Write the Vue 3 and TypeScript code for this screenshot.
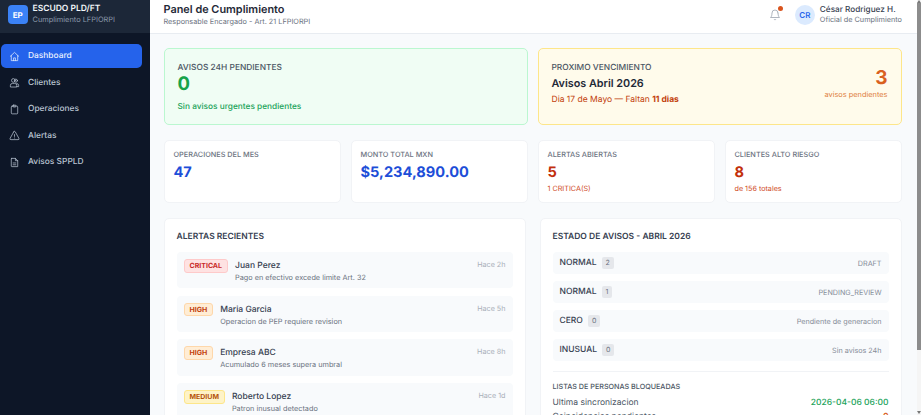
<script setup lang="ts">
const nav = [
  { label: 'Dashboard', icon: 'home', active: true },
  { label: 'Clientes', icon: 'users', active: false },
  { label: 'Operaciones', icon: 'clip', active: false },
  { label: 'Alertas', icon: 'warn', active: false },
  { label: 'Avisos SPPLD', icon: 'doc', active: false },
]
const stats = [
  { label: 'OPERACIONES DEL MES', value: '47', sub: '', tone: 'blue' },
  { label: 'MONTO TOTAL MXN', value: '$5,234,890.00', sub: '', tone: 'blue' },
  { label: 'ALERTAS ABIERTAS', value: '5', sub: '1 CRITICA(S)', tone: 'red' },
  { label: 'CLIENTES ALTO RIESGO', value: '8', sub: 'de 156 totales', tone: 'red' },
]
const alerts = [
  { level: 'CRITICAL', cls: 'critical', name: 'Juan Perez', desc: 'Pago en efectivo excede limite Art. 32', time: 'Hace 2h' },
  { level: 'HIGH', cls: 'high', name: 'Maria Garcia', desc: 'Operacion de PEP requiere revision', time: 'Hace 5h' },
  { level: 'HIGH', cls: 'high', name: 'Empresa ABC', desc: 'Acumulado 6 meses supera umbral', time: 'Hace 8h' },
  { level: 'MEDIUM', cls: 'medium', name: 'Roberto Lopez', desc: 'Patron inusual detectado', time: 'Hace 1d' },
]
const avisos = [
  { type: 'NORMAL', count: 2, status: 'DRAFT' },
  { type: 'NORMAL', count: 1, status: 'PENDING_REVIEW' },
  { type: 'CERO', count: 0, status: 'Pendiente de generacion' },
  { type: 'INUSUAL', count: 0, status: 'Sin avisos 24h' },
]
</script>

<template>
  <div class="app">
    <aside class="sidebar">
      <div class="brand">
        <div class="logo">EP</div>
        <div>
          <div class="brand-name">ESCUDO PLD/FT</div>
          <div class="brand-sub">Cumplimiento LFPIORPI</div>
        </div>
      </div>
      <nav class="nav">
        <a v-for="item in nav" :key="item.label" class="nav-item" :class="{ active: item.active }">
          <svg class="nav-icon" viewBox="0 0 24 24" fill="none" stroke="currentColor" stroke-width="1.6" stroke-linecap="round" stroke-linejoin="round">
            <template v-if="item.icon === 'home'">
              <path d="M3 11.5 12 3l9 8.5" /><path d="M5 10v11h14V10" /><path d="M10 21v-6h4v6" />
            </template>
            <template v-else-if="item.icon === 'users'">
              <circle cx="9.5" cy="7.5" r="4" /><circle cx="15" cy="8" r="3.4" /><path d="M3 21v-2.5A4.5 4.5 0 0 1 7.5 14h5a4.5 4.5 0 0 1 4.5 4.5V21z" /><path d="M17 14.2a4 4 0 0 1 4 4V21h-4" />
            </template>
            <template v-else-if="item.icon === 'clip'">
              <rect x="5" y="4.5" width="14" height="17" rx="2" /><rect x="9" y="2.5" width="6" height="4" rx="1" />
            </template>
            <template v-else-if="item.icon === 'warn'">
              <path d="M10.3 4 2.5 18a2 2 0 0 0 1.7 3h15.6a2 2 0 0 0 1.7-3L13.7 4a2 2 0 0 0-3.4 0z" /><path d="M12 10v4" /><path d="M12 17.5h.01" />
            </template>
            <template v-else>
              <path d="M6 3h8l5 5v13H6a1 1 0 0 1-1-1V4a1 1 0 0 1 1-1z" /><path d="M14 3v5h5" /><path d="M9 13h6" /><path d="M9 17h6" />
            </template>
          </svg>
          <span>{{ item.label }}</span>
        </a>
      </nav>
    </aside>

    <div class="main">
      <header class="topbar">
        <div>
          <div class="title">Panel de Cumplimiento</div>
          <div class="subtitle">Responsable Encargado - Art. 21 LFPIORPI</div>
        </div>
        <div class="top-right">
          <div class="bell">
            <svg viewBox="0 0 24 24" fill="none" stroke="currentColor" stroke-width="1.6" stroke-linecap="round" stroke-linejoin="round">
              <path d="M18 8a6 6 0 0 0-12 0c0 7-3 9-3 9h18s-3-2-3-9" /><path d="M13.7 21a2 2 0 0 1-3.4 0" />
            </svg>
            <span class="bell-dot"></span>
          </div>
          <div class="avatar">CR</div>
          <div>
            <div class="user-name">César Rodriguez H.</div>
            <div class="user-role">Oficial de Cumplimiento</div>
          </div>
        </div>
      </header>

      <main class="content">
        <section class="hero-row">
          <div class="hero hero-green">
            <div class="hero-label">AVISOS 24H PENDIENTES</div>
            <div class="hero-zero">0</div>
            <div class="hero-ok">Sin avisos urgentes pendientes</div>
          </div>
          <div class="hero hero-yellow">
            <div>
              <div class="hero-label">PROXIMO VENCIMIENTO</div>
              <div class="hero-title">Avisos Abril 2026</div>
              <div class="hero-due">Dia 17 de Mayo — Faltan <strong>11 dias</strong></div>
            </div>
            <div class="hero-side">
              <div class="hero-num">3</div>
              <div class="hero-num-label">avisos pendientes</div>
            </div>
          </div>
        </section>

        <section class="stats">
          <div v-for="s in stats" :key="s.label" class="stat">
            <div class="stat-label">{{ s.label }}</div>
            <div class="stat-value" :class="s.tone">{{ s.value }}</div>
            <div v-if="s.sub" class="stat-sub">{{ s.sub }}</div>
          </div>
        </section>

        <section class="panels">
          <div class="panel">
            <h3 class="panel-title">ALERTAS RECIENTES</h3>
            <div class="alert-list">
              <div v-for="a in alerts" :key="a.name" class="alert">
                <span class="badge" :class="a.cls">{{ a.level }}</span>
                <div class="alert-body">
                  <div class="alert-name">{{ a.name }}</div>
                  <div class="alert-desc">{{ a.desc }}</div>
                </div>
                <span class="alert-time">{{ a.time }}</span>
              </div>
            </div>
          </div>
          <div class="panel">
            <h3 class="panel-title">ESTADO DE AVISOS - ABRIL 2026</h3>
            <div class="aviso-list">
              <div v-for="(a, i) in avisos" :key="i" class="aviso">
                <span class="aviso-type">{{ a.type }}</span>
                <span class="count">{{ a.count }}</span>
                <span class="aviso-status">{{ a.status }}</span>
              </div>
            </div>
            <div class="lists">
              <div class="lists-title">LISTAS DE PERSONAS BLOQUEADAS</div>
              <div class="lists-row"><span>Ultima sincronizacion</span><span class="ok">2026-04-06 06:00</span></div>
              <div class="lists-row"><span>Coincidencias pendientes</span><span class="warn">0</span></div>
            </div>
          </div>
        </section>
      </main>
    </div>
    <div class="scrollbar">
      <div class="arrow up"></div>
      <div class="thumb"></div>
      <div class="arrow down"></div>
    </div>
  </div>
</template>

<style scoped>
.app {
  position: relative;
  display: flex;
  width: 921px;
  height: 415px;
  overflow: hidden;
  background: #f8fafc;
  font-family: Inter, "Noto Sans", sans-serif;
  color: #1f2937;
  text-rendering: geometricPrecision;
  will-change: opacity;
  opacity: 0.999;
}
.sidebar {
  flex: 0 0 149.5px;
  background: #0d1627;
  color: #b9c4d2;
}
.brand {
  display: flex;
  align-items: center;
  gap: 5px;
  height: 33px;
  padding: 0 8px 4px;
  background: #1c2738;
  box-sizing: border-box;
}
.logo {
  width: 19.5px;
  height: 19.5px;
  border-radius: 4px;
  background: #3b82f6;
  color: #fff;
  font-size: 8px;
  font-weight: 700;
  display: flex;
  align-items: center;
  justify-content: center;
}
.brand-name { font-size: 8.5px; font-weight: 600; color: #f1f5f9; line-height: 11px; }
.brand-sub { font-size: 7.4px; color: #8b98aa; line-height: 10px; }
.nav { display: flex; flex-direction: column; gap: 2px; padding: 10.8px 8px 0 1px; }
.nav-item {
  display: flex;
  align-items: center;
  gap: 8px;
  height: 24.6px;
  padding: 0 8px;
  border-radius: 5px;
  font-size: 8.4px;
  font-weight: 500;
  color: #b9c4d2;
}
.nav-item.active { background: #2563eb; color: #e8f0fe; }
.nav-icon { width: 11px; height: 11px; flex: none; }
.main { flex: 1; min-width: 0; display: flex; flex-direction: column; }
.topbar {
  height: 34px;
  box-sizing: border-box;
  flex: none;
  background: #fff;
  border-bottom: 1px solid #e8ecf1;
  display: flex;
  align-items: center;
  justify-content: space-between;
  padding: 0 19px 4px 14px;
}
.title { font-size: 10.9px; font-weight: 600; color: #1f2937; line-height: 15px; }
.subtitle { font-size: 7.3px; color: #6b7280; line-height: 10px; }
.top-right { display: flex; align-items: center; }
.bell { position: relative; width: 11px; height: 12px; color: #9ca3af; margin-right: 15px; }
.bell svg { width: 12px; height: 12px; display: block; }
.bell-dot { position: absolute; top: -3px; right: -3px; width: 5px; height: 5px; border-radius: 50%; background: #d9541e; }
.avatar {
  width: 20px;
  height: 20px;
  border-radius: 50%;
  background: #dbeafe;
  color: #2563eb;
  font-size: 8px;
  font-weight: 600;
  display: flex;
  align-items: center;
  justify-content: center;
  margin-right: 5px;
}
.user-name { font-size: 8.2px; font-weight: 500; color: #374151; line-height: 11px; }
.user-role { font-size: 7.3px; color: #6b7280; line-height: 10px; }
.content { padding: 14px 0 0 14px; width: 738px; }
.hero-row { display: grid; grid-template-columns: 1fr 1fr; gap: 10px; }
.hero {
  height: 77px;
  box-sizing: border-box;
  border-radius: 5px;
  padding: 14px 13px 0;
}
.hero-green { background: #f0fdf4; border: 1px solid #bbf7d0; }
.hero-yellow {
  background: #fffbeb;
  border: 1px solid #fde68a;
  display: flex;
  justify-content: space-between;
}
.hero-label { font-size: 8.4px; font-weight: 500; color: #4b5563; line-height: 11px; }
.hero-zero { font-size: 18.5px; font-weight: 700; color: #16a34a; line-height: 20px; }
.hero-ok { font-size: 8.3px; color: #22a35a; line-height: 11px; margin-top: 8px; font-weight: 500; }
.hero-title { font-size: 10.8px; font-weight: 600; color: #1f2937; line-height: 15px; margin-top: 2px; }
.hero-due { font-size: 8.5px; color: #c2410c; line-height: 11px; margin-top: 4px; }
.hero-due strong { font-weight: 700; }
.hero-side { text-align: right; padding-top: 4px; }
.hero-num { font-size: 19px; font-weight: 700; color: #d9601e; line-height: 22px; }
.hero-num-label { font-size: 7.4px; color: #e0803f; line-height: 10px; margin-top: 1px; }
.stats { display: grid; grid-template-columns: repeat(4, 1fr); gap: 10px; margin-top: 15px; }
.stat {
  height: 63px;
  box-sizing: border-box;
  background: #fff;
  border: 1px solid #f1f3f6;
  border-radius: 5px;
  padding: 9px 9px;
}
.stat-label { font-size: 7.3px; font-weight: 500; color: #6b7280; line-height: 10px; }
.stat-value { font-size: 14.6px; font-weight: 700; line-height: 20px; margin-top: 2px; }
.stat-value.blue { color: #1d4ed8; }
.stat-value.red { color: #c2300c; }
.stat-sub { font-size: 7.2px; color: #cf4b26; line-height: 10px; margin-top: 2px; }
.panels { display: grid; grid-template-columns: 1fr 1fr; gap: 14px; margin-top: 15px; }
.panel {
  background: #fff;
  border: 1px solid #f1f3f6;
  border-radius: 5px;
  padding: 13px 12px 0;
}
.panel-title { margin: 0; font-size: 8.5px; font-weight: 600; color: #374151; line-height: 11px; }
.alert-list { display: flex; flex-direction: column; gap: 7.3px; margin-top: 9px; }
.alert {
  display: flex;
  align-items: flex-start;
  height: 36.4px;
  box-sizing: border-box;
  background: #f8fafc;
  border-radius: 4px;
  padding: 7px 7px;
}
.badge {
  font-size: 7px;
  font-weight: 700;
  line-height: 11.5px;
  padding: 0 5px;
  border-radius: 3px;
  margin-right: 7px;
  border: 1px solid transparent;
  flex: none;
}
.badge.critical { background: #fee2e2; color: #c92a2a; border-color: #fecaca; }
.badge.high { background: #ffedd5; color: #c2410c; border-color: #fed7aa; }
.badge.medium { background: #fef3c7; color: #b45309; border-color: #fde68a; }
.alert-body { flex: 1; min-width: 0; }
.alert-name { font-size: 8.5px; font-weight: 500; color: #374151; line-height: 11px; margin-top: 2px; }
.alert-desc { font-size: 7.3px; color: #6b7280; line-height: 10px; margin-top: 1px; }
.alert-time { font-size: 7.2px; color: #a8afb9; line-height: 10px; margin-top: 1px; }
.aviso-list { display: flex; flex-direction: column; gap: 7.4px; margin-top: 9px; }
.aviso {
  display: flex;
  align-items: center;
  height: 21.6px;
  box-sizing: border-box;
  background: #f8fafc;
  border-radius: 4px;
  padding: 1px 7px 0;
}
.aviso-type { font-size: 8.5px; font-weight: 500; color: #374151; }
.count {
  font-size: 7px;
  color: #6b7280;
  background: #e5e7eb;
  border-radius: 2px;
  padding: 2px 4px;
  margin-left: 5px;
  line-height: 8px;
}
.aviso-status { margin-left: auto; font-size: 7.2px; color: #858c98; }
.lists { margin-top: 10px; border-top: 1px solid #f1f3f6; padding-top: 10px; }
.lists-title { font-size: 7.2px; font-weight: 500; color: #4b5563; line-height: 10px; }
.lists-row { display: flex; justify-content: space-between; font-size: 8.5px; color: #4b5563; line-height: 11px; margin-top: 6px; }
.lists-row + .lists-row { margin-top: 3px; }
.lists-row .ok { color: #22a35a; font-weight: 500; }
.lists-row .warn { color: #d9601e; font-weight: 600; }
.scrollbar { position: absolute; left: 917px; top: 0; width: 4px; height: 415px; background: #f5f5f5; display: flex; flex-direction: column; }
.thumb { width: 4px; height: 347px; background: #8c8c8c; }
.arrow { width: 0; height: 0; border-left: 2px solid transparent; border-right: 2px solid transparent; }
.arrow.up { border-bottom: 3px solid #777; }
.arrow.down { border-top: 3px solid #777; margin-top: auto; margin-bottom: 1px; }
</style>
